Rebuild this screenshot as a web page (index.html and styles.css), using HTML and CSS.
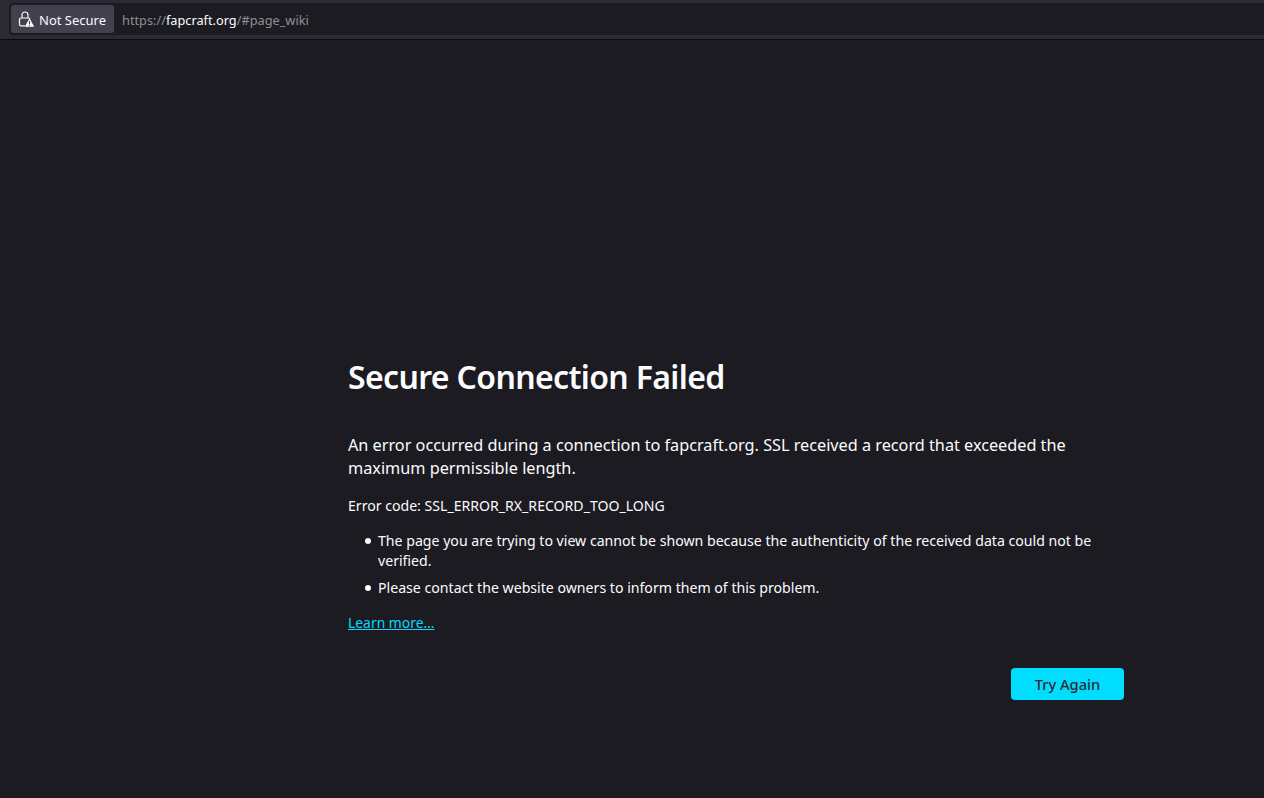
FILE: index.html
```html
<!DOCTYPE html>
<html lang="en">
  <head>
    <meta charset="utf-8">
    <title>Problem loading page</title>
    <link rel="stylesheet" href="styles.css">
  </head>
  <body>
    <div class="toolbar">
      <div class="urlbar">
        <div class="identity">
          <svg class="lock" width="16" height="16" viewBox="0 0 16 16">
            <path d="M4 7V4a3 3 0 0 1 6 0v3M6.500 14.900H3.200A1.700 1.700 0 0 1 1.500 13.200V8.700A1.700 1.700 0 0 1 3.200 7H10.300A1.700 1.700 0 0 1 11.700 7.700" fill="none" stroke="#fbfbfe" stroke-width="1.200" stroke-linecap="round"/>
            <path d="M11.500 8.500 15.300 15.200H7.700Z" fill="#fbfbfe" stroke="#fbfbfe" stroke-width="1.200" stroke-linejoin="round"/>
            <path d="M11.500 10v3M11.500 13.800v1.200" stroke="#42414d" stroke-width="1.100"/>
          </svg>
          <span class="identity-label">Not Secure</span>
        </div>
        <div class="url">https://<span class="domain">fapcraft.org</span>/#page_wiki</div>
      </div>
    </div>
    <main class="page">
      <div class="container">
        <h1 class="title">Secure Connection Failed</h1>
        <p class="short-desc">An error occurred during a connection to fapcraft.org. SSL received a record that exceeded the<br>maximum permissible length.</p>
        <p class="error-code">Error code: <span class="code">SSL_ERROR_RX_RECORD_TOO_LONG</span></p>
        <ul class="long-desc">
          <li>The page you are trying to view cannot be shown because the authenticity of the received data could not be<br>verified.</li>
          <li>Please contact the website owners to inform them of this problem.</li>
        </ul>
        <a class="learn-more" href="#">Learn more…</a>
        <div class="buttons">
          <button class="try-again">Try Again</button>
        </div>
      </div>
    </main>
  </body>
</html>
```

FILE: styles.css
```css
* {
  box-sizing: border-box;
}
body {
  margin: 0;
  height: 100vh;
  overflow: hidden;
  background: #1c1b22;
  color: #fbfbfe;
  font-family: "Noto Sans", "Open Sans", sans-serif;
  font-size: 14.1px;
  line-height: 20px;
}
.toolbar {
  height: 40px;
  padding: 3px 0 0 9px;
  background: #2b2a33;
  border-bottom: 1px solid #0c0c0d;
}
.urlbar {
  display: flex;
  height: 32px;
  padding: 2px;
  background: #1c1b22;
  border-radius: 4px 0 0 4px;
  white-space: nowrap;
}
.identity {
  display: flex;
  align-items: center;
  width: 103px;
  height: 28px;
  padding-left: 7px;
  background: #42414d;
  border-radius: 3px;
}
.lock {
  flex: none;
  margin-right: 5px;
}
.identity-label {
  padding-top: 2px;
  font-size: 13px;
}
.url {
  margin-left: 8px;
  color: #8f8f96;
  font-size: 12.75px;
  line-height: 30px;
}
.domain {
  color: #fbfbfe;
}
.container {
  width: 776px;
  margin-left: 348px;
  padding-top: 315px;
  white-space: nowrap;
}
.title {
  margin: 0;
  font-size: 32px;
  font-weight: 600;
  letter-spacing: -0.65px;
  line-height: 44px;
}
.short-desc {
  margin: 35px 0 0;
  font-size: 16.25px;
  letter-spacing: -0.01px;
  line-height: 23px;
}
.error-code {
  margin: 16px 0 0;
}
.long-desc {
  margin: 15px 0 0;
  padding-left: 30px;
  list-style: none;
  font-size: 14.14px;
}
.long-desc li {
  margin-bottom: 7px;
}
.long-desc li::before {
  content: "";
  display: inline-block;
  width: 6px;
  height: 6px;
  margin: 0 7px 2px -13px;
  border-radius: 50%;
  background: #fbfbfe;
}
.learn-more {
  display: block;
  width: max-content;
  margin-top: 15px;
  color: #00ddff;
  font-size: 13.9px;
}
.buttons {
  display: flex;
  justify-content: flex-end;
  margin-top: 35px;
}
.try-again {
  width: 113px;
  height: 32px;
  padding: 0;
  border: 0;
  border-radius: 4px;
  background: #00ddff;
  color: #2b2a33;
  font: 500 14.7px "Noto Sans", "Open Sans", sans-serif;
}
```
